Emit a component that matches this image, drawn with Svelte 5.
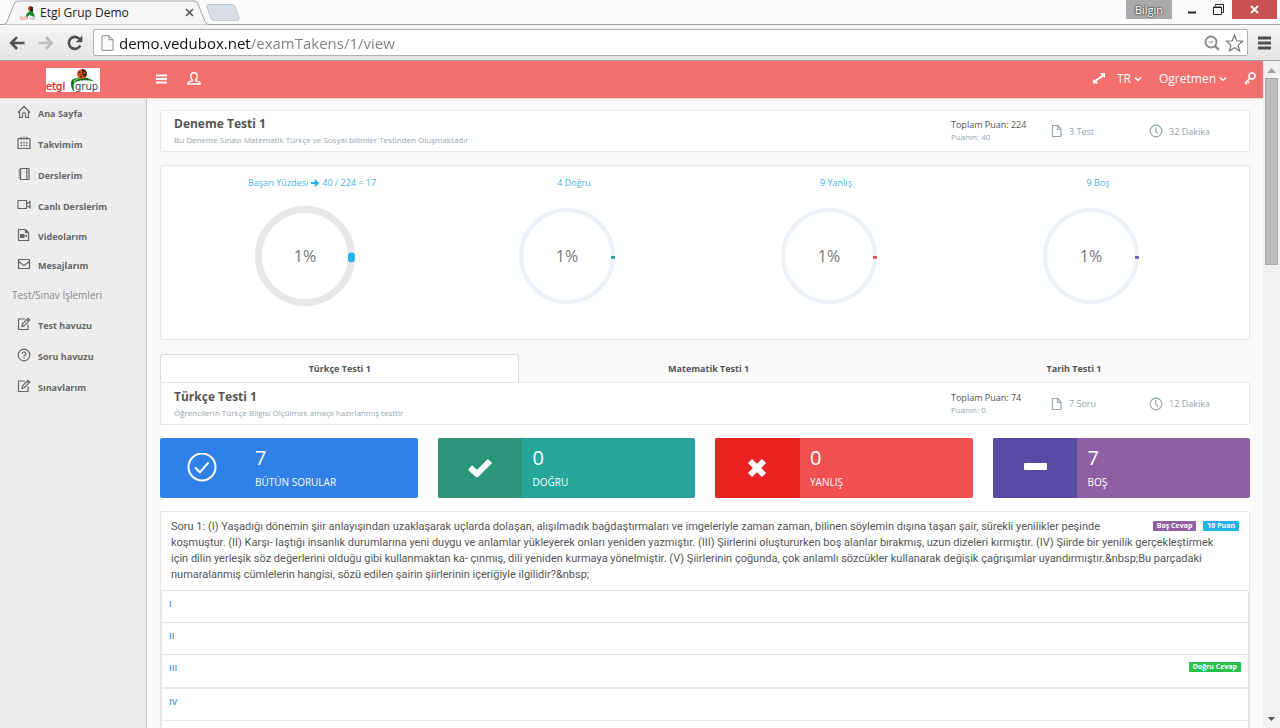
<script>
    let address = 'demo.vedubox.net/examTakens/1/view';
    let activeTab = 0;

    const menu = [
        { icon: 'home', label: 'Ana Sayfa' },
        { icon: 'calendar', label: 'Takvimim' },
        { icon: 'notebook', label: 'Derslerim' },
        { icon: 'camera', label: 'Canlı Derslerim' },
        { icon: 'video', label: 'Videolarım', compact: true },
        { icon: 'mail', label: 'Mesajlarım', compact: true }
    ];

    const testMenu = [
        { icon: 'edit', label: 'Test havuzu' },
        { icon: 'help', label: 'Soru havuzu' },
        { icon: 'edit', label: 'Sınavlarım' }
    ];

    const charts = [
        { before: 'Başarı Yüzdesi', after: '40 / 224 = 17', percent: 1, color: '#22b4e8', thick: true },
        { before: '4 Doğru', percent: 1, color: '#26a69a' },
        { before: '9 Yanlış', percent: 1, color: '#f05050' },
        { before: '9 Boş', percent: 1, color: '#7266ba' }
    ];

    const tabs = ['Türkçe Testi 1', 'Matematik Testi 1', 'Tarih Testi 1'];

    const stats = [
        { kind: 'all', icon: 'circlecheck', value: 7, label: 'BÜTÜN SORULAR' },
        { kind: 'right', icon: 'check', value: 0, label: 'DOĞRU' },
        { kind: 'wrong', icon: 'cross', value: 0, label: 'YANLIŞ' },
        { kind: 'empty', icon: 'minus', value: 7, label: 'BOŞ' }
    ];

    const question = [
        'Soru 1: (I) Yaşadığı dönemin şiir anlayışından uzaklaşarak uçlarda dolaşan, alışılmadık bağdaştırmaları ve imgeleriyle zaman zaman, bilinen söylemin dışına taşan şair, sürekli yenilikler peşinde',
        'koşmuştur. (II) Karşı- laştığı insanlık durumlarına yeni duygu ve anlamlar yükleyerek onları yeniden yazmıştır. (III) Şiirlerini oluştururken boş alanlar bırakmış, uzun dizeleri kırmıştır. (IV) Şiirde bir yenilik gerçekleştirmek',
        'için dilin yerleşik söz değerlerini olduğu gibi kullanmaktan ka- çınmış, dili yeniden kurmaya yönelmiştir. (V) Şiirlerinin çoğunda, çok anlamlı sözcükler kullanarak değişik çağrışımlar uyandırmıştır.&nbsp;Bu parçadaki',
        'numaralanmış cümlelerin hangisi, sözü edilen şairin şiirlerinin içeriğiyle ilgilidir?&nbsp;'
    ];

    const options = [
        { label: 'I' },
        { label: 'II' },
        { label: 'III', correct: true },
        { label: 'IV' }
    ];
</script>

{#snippet icon(name)}
    {#if name === 'home'}
        <svg class="line" width="14" height="14" viewBox="0 0 14 14"><path d="M1 7.5 7 1.3l6 6.2M2.5 6v6.5h3V9a1.5 1.5 0 0 1 3 0v3.5h3V6" /></svg>
    {:else if name === 'calendar'}
        <svg class="line" width="14" height="14" viewBox="0 0 14 14"><path d="M1 2.5h12v10H1zM4 .8v3M7 .8v3M10 .8v3" /><path d="M3.5 6.7h7.5M3.5 9.5h7.5" stroke-dasharray="1.6 1.2" stroke-width="1.6" /></svg>
    {:else if name === 'notebook'}
        <svg class="line" width="14" height="14" viewBox="0 0 14 14"><path d="M3.5 1.5H12v11H3.5zM9.8 1.5v11" /><path d="M2.500 2.200v10" stroke-width="2" stroke-dasharray="1 1" /></svg>
    {:else if name === 'camera'}
        <svg class="line" width="14" height="14" viewBox="0 0 14 14"><path d="M1 2.500h8.500v8H1zM9.500 5.300h1.200l2.300-1.800v6.300L10.700 8H9.500" /></svg>
    {:else if name === 'video'}
        <svg class="line" width="14" height="14" viewBox="0 0 14 14"><path d="M1.500 1.500h7l3 3v8h-10zM8.500 1.500v3h3" /><path class="solid" d="M3 6h4.500v4H3zM7.500 8 10 6.500v3z" /></svg>
    {:else if name === 'mail'}
        <svg class="line" width="14" height="14" viewBox="0 0 14 14"><path d="M1.500 2.500h11v9h-11zM1.500 4.500 7 8.500l5.500-4" /></svg>
    {:else if name === 'edit'}
        <svg class="line" width="14" height="14" viewBox="0 0 14 14"><path d="M8 2H1.500v10.500h9.500V7.500M5 9.300l.5-2.500L11 1.300l1.800 1.800-5.500 5.500zM9.800 2.600l1.700 1.700" /></svg>
    {:else if name === 'help'}
        <svg class="line" width="14" height="14" viewBox="0 0 14 14"><circle cx="7" cy="7" r="5.800" /><path d="M5.200 5.800a1.800 1.800 0 1 1 2.700 1.500q-.9.500-.9 1.200M7 9.500v1.200" /></svg>
    {:else if name === 'doc'}
        <svg class="line" width="12" height="14" viewBox="0 0 12 14"><path d="M1.500 1.500h5.500l3 3.500v7.500H1.500zM6.500 1.500v4H10" /></svg>
    {:else if name === 'clock'}
        <svg class="line" width="14" height="14" viewBox="0 0 14 14"><circle cx="7" cy="7" r="5.800" /><path d="M6.700 3.200v4l2.300 2" /></svg>
    {:else if name === 'arrow'}
        <svg width="8" height="8" viewBox="0 0 8 8"><path d="M0 4h6.500M3.800 1 6.900 4 3.800 7" fill="none" stroke="#22b4e8" stroke-width="1.900" /></svg>
    {:else if name === 'circlecheck'}
        <svg width="30" height="30" viewBox="0 0 30 30" fill="none" stroke="#fff" stroke-width="2"><circle cx="15" cy="14" r="13.500" /><path d="m8 14.500 5 4.800 8.500-10" /></svg>
    {:else if name === 'check'}
        <svg width="28" height="24" viewBox="0 0 28 24"><path d="m4 11.500 7 6.500L24 5" fill="none" stroke="#fff" stroke-width="6" stroke-linejoin="round" /></svg>
    {:else if name === 'cross'}
        <svg width="22" height="22" viewBox="0 0 22 22"><path d="m4 4 14 14m0-14L4 18" fill="none" stroke="#fff" stroke-width="6" /></svg>
    {:else if name === 'minus'}
        <svg width="24" height="22" viewBox="0 0 24 22"><rect x="1" y="6" width="23" height="7" rx="1" fill="#fff" /></svg>
    {:else if name === 'chevron'}
        <svg width="8" height="6" viewBox="0 0 8 6"><path d="m1 1.500 3 3 3-3" fill="none" stroke="#fff" stroke-width="1.400" /></svg>
    {/if}
{/snippet}

{#snippet logo(width, height)}
    <svg {width} {height} viewBox="0 0 54 24" aria-hidden="true">
        <rect width="54" height="24" fill="#fff" />
        <path d="M27 23q-5-11 2-12.500 6-2 12-.5 5 1.500 8 3.500-8-2-14-1t-7 3 0 7.500z" fill="#0a6d1d" />
        <path d="M27 13q5-5 11-3-6 0-10 5z" fill="#5fc04a" />
        <circle cx="36" cy="6" r="5" fill="#e4511b" />
        <path d="M36 1a5 5 0 0 1 5 5l-2 3-3-3z" fill="#2b1b12" />
        <circle cx="33.500" cy="4.500" r="1" fill="#2b1b12" />
        <circle cx="35" cy="8.500" r="1" fill="#2b1b12" />
        <circle cx="38.500" cy="5" r="1.200" fill="#e4511b" />
        <text x="0" y="22" font-family="DejaVu Sans, sans-serif" font-size="10" stroke="#e23a2a" stroke-width=".4" fill="#e23a2a">etgi</text>
        <text x="29" y="22" font-family="DejaVu Sans, sans-serif" font-size="10" fill="#444">grup</text>
    </svg>
{/snippet}

{#snippet testHeader(title, description, total, score, count, minutes)}
    <section class="card summary">
        <div>
            <h2>{title}</h2>
            <p>{description}</p>
        </div>
        <div class="points">
            <strong>{total}</strong>
            <small>{score}</small>
        </div>
        <div class="meta">{@render icon('doc')}<span>{count}</span></div>
        <div class="meta">{@render icon('clock')}<span>{minutes}</span></div>
    </section>
{/snippet}

<div class="browser">
    <div class="tabstrip">
        <div class="browser-tab">
            <svg class="tab-shape" width="212" height="25" viewBox="0 0 212 25"><path d="M0 24.500h3q3 0 4-3L14 4q1-3 4-3h176q3 0 4 3l7 17.500q1 3 4 3h3" fill="#f6f6f6" stroke="#a3a3a3" /></svg>
            <svg width="16" height="16" viewBox="0 0 16 16">
                <path d="M6 10q2-4 5-4 3 1 4 6l-3-1-3-1-2 3z" fill="#178a2a" />
                <circle cx="10.500" cy="3.500" r="2.500" fill="#d9481c" />
                <path d="M10 2h3v5l-3-1z" fill="#222" />
                <path d="M1 11v4M3 12v3M5 11v4M7 12v3" stroke="#ee8d84" /><path d="M10 12v3M12 12v3M14 12v3" stroke="#b5b5b5" />
            </svg>
            <span class="tab-title">Etgi Grup Demo</span>
            <button class="tab-close" aria-label="Close tab"><svg width="9" height="9" viewBox="0 0 9 9"><path d="m1 1 7 7m0-7L1 8" stroke="#555" stroke-width="1.600" /></svg></button>
        </div>
        <button class="new-tab" aria-label="New tab"><svg width="34" height="17" viewBox="0 0 34 17"><path d="M3 .5h23q2 0 3 2l4 11q1 3-2 3H9q-3 0-4-2L1 3.500Q0 .5 3 .5z" fill="#d8dde4" stroke="#c3c8cf" /></svg></button>
        <div class="window-buttons">
            <button class="profile">Bilgin</button>
            <button class="win" aria-label="Minimize"><svg width="8" height="12" viewBox="0 0 8 12"><path d="M0 8.500h8" stroke="#222" stroke-width="2" /></svg></button>
            <button class="win" aria-label="Restore"><svg width="11" height="11" viewBox="0 0 11 11" fill="none" stroke="#222"><path d="M2.500 2V.5h8v8H9" /><path d="M.5 3h8v7.500h-8z" /><path d="M0 3.500h9" /></svg></button>
            <button class="close" aria-label="Close"><svg width="9" height="9" viewBox="0 0 9 9"><path d="m1 1 7 7m0-7L1 8" stroke="#fff" stroke-width="1.800" /></svg></button>
        </div>
    </div>

    <div class="toolbar">
        <button aria-label="Back"><svg width="16" height="14" viewBox="0 0 16 14"><path d="M15.500 7H2M8 1.200 2.200 7 8 12.800" fill="none" stroke="#505050" stroke-width="2.600" /></svg></button>
        <button aria-label="Forward"><svg width="16" height="14" viewBox="0 0 16 14"><path d="M.5 7H14M8 1.200 13.800 7 8 12.800" fill="none" stroke="#bdbdbd" stroke-width="2.600" /></svg></button>
        <button aria-label="Reload"><svg width="16" height="16" viewBox="0 0 16 16"><path d="M13.300 10.500A6 6 0 1 1 12.500 4" fill="none" stroke="#505050" stroke-width="2.600" /><path d="M15.300.5v6.800H8.800z" fill="#505050" /></svg></button>
        <div class="omnibox">
            <svg width="13" height="16" viewBox="0 0 13 16"><path d="M1 .7h7l4 4v10.600H1zM8 .7v4h4" fill="#fafafa" stroke="#8b8b8b" /></svg>
            <input type="text" aria-label="Address" bind:value={address}>
            <svg width="16" height="16" viewBox="0 0 16 16" fill="none" stroke="#8a8a8a"><circle cx="7" cy="7" r="5.500" stroke-width="1.800" /><path d="M4.500 7h5" /><path d="m11 11 3.800 3.800" stroke-width="2.400" /></svg>
            <svg width="19" height="18" viewBox="0 0 19 18"><path d="m9.500 1.200 2.200 5.600 6 .4-4.600 3.900 1.500 5.800-5.100-3.200-5.100 3.200 1.500-5.800L1.300 7.200l6-.4z" fill="#fff" stroke="#777" stroke-width="1.200" /></svg>
        </div>
        <button aria-label="Menu"><svg width="13" height="14" viewBox="0 0 13 14"><path d="M0 2h13M0 7h13M0 12h13" stroke="#505050" stroke-width="3" /></svg></button>
    </div>

    <div class="viewport">
        <div class="app">
            <header>
                <a class="brand" href="#/" aria-label="Etgi Grup">{@render logo(54, 24)}</a>
                <button aria-label="Menü"><svg width="11" height="10" viewBox="0 0 11 10"><path d="M0 1.500h11M0 5h11M0 8.500h11" stroke="#fff" stroke-width="2" /></svg></button>
                <button aria-label="Profil"><svg width="14" height="13" viewBox="0 0 14 13"><path d="M5.300 8Q3.800 6.500 3.800 4 3.900.7 7 .7t3.200 3.300q0 2.500-1.500 4v.8l3.800 1.300q.7.400.7 1.900H.8q0-1.500.7-1.900l3.800-1.300z" fill="none" stroke="#fff" stroke-width="1.400" /></svg></button>
                <div class="header-right">
                    <button aria-label="Tam ekran"><svg width="12" height="11" viewBox="0 0 12 11" fill="#fff"><path d="M7 0h5v5l-1.500-1.400-7 4.500L5 10.500H0V6l1.500 1.300 7-4.800z" /></svg></button>
                    <button class="lang">TR {@render icon('chevron')}</button>
                    <button class="user">Ogretmen {@render icon('chevron')}</button>
                    <button aria-label="Çıkış"><svg width="12" height="13" viewBox="0 0 12 13" fill="none" stroke="#fff" stroke-width="1.500"><circle cx="8" cy="4" r="3" /><path d="M6 6 1 11.500M3.500 9l1.800 2M1.500 10.500l1.700 1.800" /></svg></button>
                </div>
            </header>

            <div class="columns">
                <nav>
                    {#each menu as item}
                        <a href="#/" class:compact={item.compact}>{@render icon(item.icon)}<span>{item.label}</span></a>
                    {/each}
                    <h3>Test/Sınav İşlemleri</h3>
                    {#each testMenu as item}
                        <a href="#/">{@render icon(item.icon)}<span>{item.label}</span></a>
                    {/each}
                </nav>

                <main>
                    {@render testHeader('Deneme Testi 1', 'Bu Deneme Sınavı Matematik Türkçe ve Sosyal bilimler Testinden Oluşmaktadır', 'Toplam Puan: 224', 'Puanın: 40', '3 Test', '32 Dakika')}

                    <section class="card charts">
                        {#each charts as chart}
                            <div class="chart">
                                <h4>
                                    <span>{chart.before}</span>
                                    {#if chart.after}
                                        {@render icon('arrow')}
                                        <span>{chart.after}</span>
                                    {/if}
                                </h4>
                                <div class="donut">
                                    <svg width="100" height="100" viewBox="0 0 100 100" fill="none" stroke-width={chart.thick ? 7 : 4}>
                                        <circle cx="50" cy="50" r={chart.thick ? 46.5 : 46} stroke={chart.thick ? '#e8e8e8' : '#edf2f7'} />
                                        <circle
                                            cx="50" cy="50" r={chart.thick ? 46.5 : 46}
                                            pathLength="100"
                                            stroke={chart.color}
                                            stroke-dasharray="{chart.percent} {100 - chart.percent}"
                                            stroke-linecap={chart.thick ? 'round' : 'butt'}
                                        />
                                    </svg>
                                    <span>{chart.percent}%</span>
                                </div>
                            </div>
                        {/each}
                    </section>

                    <div class="tabs" role="tablist">
                        {#each tabs as tab, i}
                            <button role="tab" aria-selected={activeTab === i} class:active={activeTab === i} on:click={() => activeTab = i}>{tab}</button>
                        {/each}
                    </div>

                    <div class="tab-content">
                        {@render testHeader('Türkçe Testi 1', 'Öğrencilerin Türkçe Bilgisi Ölçülmek amaçlı hazırlanmış testtir', 'Toplam Puan: 74', 'Puanın: 0', '7 Soru', '12 Dakika')}

                        <div class="stats">
                            {#each stats as stat}
                                <div class="stat {stat.kind}">
                                    <div class="stat-icon">{@render icon(stat.icon)}</div>
                                    <div class="stat-text">
                                        <b>{stat.value}</b>
                                        <span>{stat.label}</span>
                                    </div>
                                </div>
                            {/each}
                        </div>

                        <section class="card question">
                            <div class="question-text">
                                <div class="badges">
                                    <span class="badge purple">Boş Cevap</span>
                                    <span class="badge blue">10 Puan</span>
                                </div>
                                {#each question as line}
                                    <span>{line}</span><br>
                                {/each}
                            </div>
                            <ul>
                                {#each options as option}
                                    <li class:correct={option.correct}>
                                        <a href="#/">{option.label}</a>
                                        {#if option.correct}
                                            <span class="badge green">Doğru Cevap</span>
                                        {/if}
                                    </li>
                                {/each}
                            </ul>
                        </section>
                    </div>
                </main>
            </div>
        </div>

        <div class="scrollbar">
            <svg width="17" height="17" viewBox="0 0 17 17"><path d="m4 12 4.500-5 4.500 5z" fill="#a0a0a0" /></svg>
            <div class="thumb"></div>
            <svg width="17" height="17" viewBox="0 0 17 17"><path d="m5 6 3.500 4L12 6z" fill="#505050" /></svg>
        </div>
    </div>
</div>

<style>
    :global(body) {
        margin: 0;
    }

    .browser {
        display: flex;
        flex-direction: column;
        height: 100vh;
        overflow: hidden;
        font-family: "Open Sans", "Noto Sans", sans-serif;
        font-size: 9px;
        color: #555;
    }

    .browser :global(svg) {
        flex: none;
        display: block;
    }

    button {
        display: flex;
        align-items: center;
        justify-content: center;
        padding: 0;
        border: 0;
        background: none;
        font: inherit;
        color: inherit;
    }

    a {
        color: inherit;
        text-decoration: none;
    }

    h2, h3, h4, p, ul {
        margin: 0;
        padding: 0;
    }

    /* browser chrome */
    .tabstrip {
        display: flex;
        height: 25px;
        background: #fbfbfb;
        box-shadow: inset 0 -1px #a3a3a3;
    }

    .browser-tab {
        position: relative;
        display: flex;
        align-items: center;
        width: 192px;
        padding-left: 20px;
        font-size: 12px;
        color: #222;
    }

    .tab-shape {
        position: absolute;
        left: 0;
        top: 0;
    }

    .browser-tab > :not(.tab-shape) {
        position: relative;
    }

    .tab-title {
        flex: 1;
        padding-left: 4px;
    }

    .tab-close {
        padding-right: 18px;
    }

    .new-tab {
        height: 25px;
        padding-left: 4px;
        z-index: 1;
        margin-left: -10px;
    }

    .window-buttons {
        display: flex;
        align-items: flex-start;
        margin-left: auto;
        padding-right: 3px;
    }

    .window-buttons button {
        height: 19px;
    }

    .profile {
        width: 46px;
        margin-right: 7px;
        background: #a9a9a9;
        color: #fff;
        font-size: 11px;
        text-shadow: 0 0 2px #333, 0 0 2px #333;
    }

    .win {
        width: 26px;
    }

    .close {
        width: 45px;
        margin-left: 1px;
        background: #c75050;
    }

    .toolbar {
        display: flex;
        align-items: center;
        gap: 13px;
        box-sizing: border-box;
        height: 36px;
        padding: 0 9px;
        border-bottom: 1px solid #a0a0a0;
        background: linear-gradient(#f6f6f6, #e4e4e4);
    }

    .omnibox {
        display: flex;
        flex: 1;
        align-items: center;
        box-sizing: border-box;
        height: 27px;
        margin: 0 -3px;
        padding: 0 3px 0 7px;
        border: 1px solid #b0b0b0;
        border-radius: 2px;
        background: #fff;
        gap: 5px;
    }

    .omnibox input {
        flex: 1;
        min-width: 0;
        padding: 0;
        border: 0;
        outline: 0;
        background: linear-gradient(90deg, #111 132px, #808080 132px);
        background-clip: text;
        color: transparent;
        font: 15px "Open Sans", "Noto Sans", sans-serif;
    }

    .viewport {
        display: flex;
        flex: 1;
        min-height: 0;
    }

    .scrollbar {
        display: flex;
        flex-direction: column;
        justify-content: space-between;
        width: 17px;
        background: #f1f1f1;
    }

    .thumb {
        box-sizing: border-box;
        height: 28%;
        margin: 0 2px auto;
        border: 1px solid #a8a8a8;
        background: #bcbcbc;
    }

    /* page */
    .app {
        display: flex;
        flex: 1;
        flex-direction: column;
        min-width: 0;
        background: #fafafa;
    }

    header {
        display: flex;
        flex: none;
        align-items: center;
        height: 37px;
        background: #f3706f;
        box-shadow: 0 1px 1px #ddd;
        color: #fff;
        font-size: 12px;
        z-index: 1;
        gap: 20px;
    }

    .brand {
        width: 90px;
        padding: 0 0 0 46px;
    }

    header > button {
        padding-bottom: 2px;
    }

    .header-right {
        display: flex;
        align-items: center;
        margin-left: auto;
        padding: 0 7px 2px 0;
        gap: 17px;
    }

    .header-right button {
        gap: 3px;
    }

    .header-right .lang {
        margin-left: -5px;
    }

    .columns {
        display: flex;
        flex: 1;
        min-height: 0;
    }

    nav {
        flex: none;
        box-sizing: border-box;
        width: 147px;
        border-right: 1px solid #c4c4c4;
        background: #ededed;
        color: #666;
    }

    nav a {
        display: flex;
        align-items: center;
        height: 31px;
        padding-left: 17px;
        gap: 7px;
        font-weight: bold;
    }

    nav a.compact {
        height: 29px;
    }

    nav a :global(svg) {
        margin-bottom: 3px;
    }

    nav h3 {
        padding-left: 12px;
        font-size: 10px;
        font-weight: normal;
        line-height: 30px;
        color: #888;
    }

    .browser :global(svg.line) {
        fill: none;
        stroke: currentColor;
        stroke-width: 1.2;
    }

    .browser :global(.solid) {
        fill: currentColor;
        stroke: none;
    }

    main {
        flex: 1;
        min-width: 0;
        padding: 12px 13px;
        overflow: hidden;
    }

    .card {
        box-sizing: border-box;
        border: 1px solid #e4e8ea;
        border-radius: 2px;
        background: #fff;
    }

    .summary {
        display: grid;
        grid-template-columns: 1fr 100px 98px 100px;
        align-items: center;
        height: 42px;
        padding-left: 13px;
    }

    .summary h2 {
        font-size: 12px;
        line-height: 18px;
    }

    .summary p {
        font-size: 8px;
        line-height: 14px;
        color: #98a6ad;
    }

    .points strong,
    .points small {
        display: block;
        font-weight: normal;
        line-height: 12px;
    }

    .points strong {
        font-size: 9px;
    }

    .points small {
        font-size: 8px;
        color: #98a6ad;
    }

    .meta {
        display: flex;
        align-items: center;
        gap: 6px;
        color: #98a6ad;
    }

    .charts {
        display: grid;
        grid-template-columns: repeat(4, 1fr);
        height: 175px;
        margin: 13px 0 14px;
        padding: 10px 27px 0 13px;
    }

    .chart h4 {
        display: flex;
        align-items: center;
        justify-content: center;
        gap: 3px;
        padding-left: 14px;
        font-size: 9px;
        font-weight: normal;
        line-height: 14px;
        color: #4ab5e3;
    }

    .donut {
        display: grid;
        place-items: center;
        padding-top: 16px;
    }

    .donut > :global(*) {
        grid-area: 1 / 1;
    }

    .donut span {
        font-size: 16px;
        color: #777;
    }

    .tabs {
        display: flex;
        height: 28px;
    }

    .tabs button {
        flex: 1 1 auto;
        border: 1px solid transparent;
        border-bottom: 0;
        border-radius: 3px 3px 0 0;
        font-weight: bold;
    }

    .tabs .active {
        border-color: #ddd;
        background: #fff;
    }

    .tab-content {
        background: #fff;
    }

    .tab-content > :global(.summary) {
        height: 43px;
    }

    .stats {
        display: grid;
        grid-template-columns: repeat(4, 1fr);
        gap: 20px;
        margin: 13px 0;
    }

    .stat {
        display: grid;
        grid-template-columns: 33% 1fr;
        height: 60px;
        border-radius: 2px;
        overflow: hidden;
        color: #fff;
    }

    .stat-icon {
        display: grid;
        place-items: center;
    }

    .stat-text {
        display: flex;
        flex-direction: column;
        padding: 7px 10px 0;
        font-size: 10px;
    }

    .stat-text b {
        font-size: 20px;
        font-weight: normal;
        line-height: 26px;
    }

    .stat-text span {
        line-height: 22px;
    }

    .all {
        background: #2f80e7;
    }

    .right {
        background: #26a69a;
    }

    .right .stat-icon {
        background: #2b957a;
    }

    .wrong {
        background: #f05050;
    }

    .wrong .stat-icon {
        background: #ec2121;
    }

    .empty {
        background: #8e5fa2;
    }

    .empty .stat-icon {
        background: #564aa3;
    }

    .question-text {
        padding: 7px 10px 7px;
        font-family: Roboto, "Open Sans", sans-serif;
        font-size: 11px;
        line-height: 16px;
        color: #555;
    }

    .badges {
        display: flex;
        float: right;
        margin-top: 2px;
        gap: 7px;
        font-family: "Open Sans", "Noto Sans", sans-serif;
    }

    .badge {
        padding: 0 4px;
        border-radius: 1px;
        color: #fff;
        font-size: 7px;
        font-weight: bold;
        line-height: 10px;
    }

    .purple {
        background: #8e5fa2;
    }

    .blue {
        background: #22b4e8;
    }

    .green {
        background: #27c24c;
    }

    ul {
        padding-bottom: 32px;
        border: 1px solid #e4e8ea;
        border-radius: 2px 2px 0 0;
        list-style: none;
    }

    li {
        display: flex;
        align-items: flex-start;
        justify-content: space-between;
        box-sizing: border-box;
        height: 32px;
        padding: 7px 7px 0;
        border-bottom: 1px solid #e4e8ea;
    }

    li a {
        color: #4a90ea;
        font-weight: 600;
        line-height: 12px;
    }

    li.correct {
        height: 34px;
        border-bottom-width: 2px;
    }
</style>
